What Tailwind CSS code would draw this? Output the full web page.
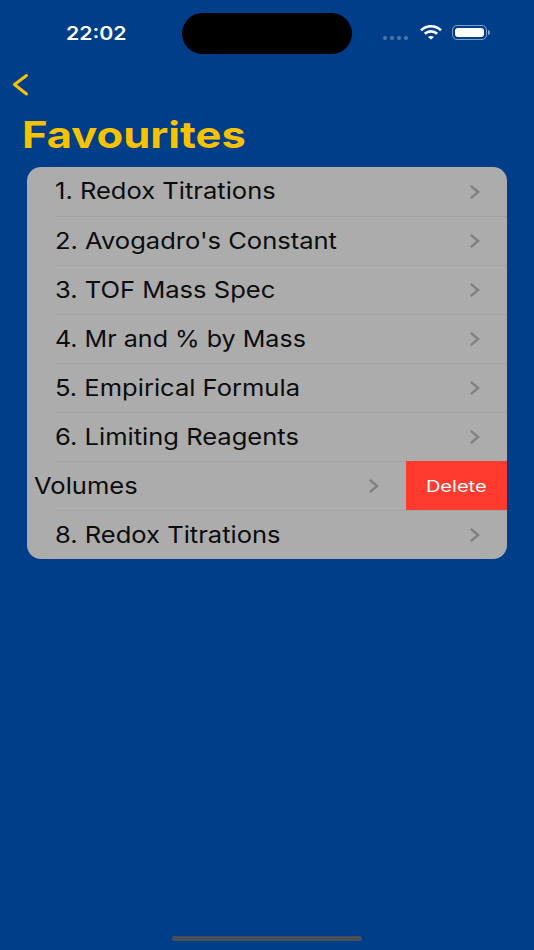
<!DOCTYPE html>
<html lang="en">
<head>
  <meta charset="UTF-8" />
  <meta name="viewport" content="width=device-width, initial-scale=1" />
  <title>Favourites</title>
  <script src="https://cdn.jsdelivr.net/npm/@tailwindcss/browser@4"></script>
</head>
<body class="bg-[#003e8a] font-['Inter',sans-serif]">
  <div class="relative w-[534px] h-[950px] overflow-hidden">
    <!-- status bar -->
    <div class="relative h-[66px]">
      <span class="absolute left-[66px] top-[21px] text-[19px] leading-[25px] font-semibold text-white origin-left scale-x-[1.12]">22:02</span>
      <div class="absolute left-[182px] top-[13px] w-[170px] h-[41px] rounded-full bg-black"></div>
      <div class="absolute left-[383px] top-[36px] flex gap-[3px]">
        <span class="w-[4px] h-[4px] rounded-full bg-white/30"></span>
        <span class="w-[4px] h-[4px] rounded-full bg-white/30"></span>
        <span class="w-[4px] h-[4px] rounded-full bg-white/30"></span>
        <span class="w-[4px] h-[4px] rounded-full bg-white/30"></span>
      </div>
      <svg class="absolute left-[420px] top-[25px]" width="22" height="15" viewBox="0 0 22 15" fill="none" stroke="white" stroke-width="2.6">
        <path d="M1 5.2C6.8 0 15.2 0 21 5.2" />
        <path d="M4.8 8.8C8.4 5.6 13.6 5.6 17.2 8.8" />
        <path d="M8 12 11 14.6 14 12C12.2 10.6 9.8 10.6 8 12Z" fill="white" stroke="none" />
      </svg>
      <div class="absolute left-[452px] top-[25px] w-[35px] h-[15px] rounded-[5px] border border-white/50 p-[2px]">
        <div class="w-full h-full rounded-[3px] bg-white"></div>
      </div>
      <div class="absolute left-[488px] top-[30px] w-[2px] h-[5px] rounded-r-sm bg-white/50"></div>
    </div>

    <!-- back -->
    <svg class="ml-[12px] mt-[7px] block" width="17" height="24" viewBox="0 0 17 24" fill="none" stroke="#f9c200" stroke-width="3" stroke-linecap="round" stroke-linejoin="round">
      <path d="M14.500 2.500 2.500 11.500 14.500 21" />
    </svg>

    <h1 class="ml-[22px] mt-[15px] text-[37px] leading-[46px] font-bold text-[#f9c200] origin-left scale-x-[1.175]">Favourites</h1>

    <!-- list -->
    <div class="ml-[27px] mt-[9px] w-[480px] rounded-[14px] bg-[#acacac] overflow-hidden text-[23px] text-[#0c0c0c]">
      <div class="flex items-center justify-between h-[49px] ml-[28px] pr-[27px]">
        <span class="origin-left scale-x-[1.11]">1. Redox Titrations</span>
        <svg width="11" height="16" viewBox="0 0 11 16" fill="none" stroke="#808080" stroke-width="2.4"><path d="M1.800 1.800 9.200 8 1.800 14.200" /></svg>
      </div>
      <div class="flex items-center justify-between h-[49px] ml-[28px] pr-[27px] border-t border-[#a2a2a2]">
        <span class="origin-left scale-x-[1.11]">2. Avogadro's Constant</span>
        <svg width="11" height="16" viewBox="0 0 11 16" fill="none" stroke="#808080" stroke-width="2.4"><path d="M1.800 1.800 9.200 8 1.800 14.200" /></svg>
      </div>
      <div class="flex items-center justify-between h-[49px] ml-[28px] pr-[27px] border-t border-[#a2a2a2]">
        <span class="origin-left scale-x-[1.11]">3. TOF Mass Spec</span>
        <svg width="11" height="16" viewBox="0 0 11 16" fill="none" stroke="#808080" stroke-width="2.4"><path d="M1.800 1.800 9.200 8 1.800 14.200" /></svg>
      </div>
      <div class="flex items-center justify-between h-[49px] ml-[28px] pr-[27px] border-t border-[#a2a2a2]">
        <span class="origin-left scale-x-[1.09]">4. Mr and % by Mass</span>
        <svg width="11" height="16" viewBox="0 0 11 16" fill="none" stroke="#808080" stroke-width="2.4"><path d="M1.800 1.800 9.200 8 1.800 14.200" /></svg>
      </div>
      <div class="flex items-center justify-between h-[49px] ml-[28px] pr-[27px] border-t border-[#a2a2a2]">
        <span class="origin-left scale-x-[1.11]">5. Empirical Formula</span>
        <svg width="11" height="16" viewBox="0 0 11 16" fill="none" stroke="#808080" stroke-width="2.4"><path d="M1.800 1.800 9.200 8 1.800 14.200" /></svg>
      </div>
      <div class="flex items-center justify-between h-[49px] ml-[28px] pr-[27px] border-t border-[#a2a2a2]">
        <span class="origin-left scale-x-[1.11]">6. Limiting Reagents</span>
        <svg width="11" height="16" viewBox="0 0 11 16" fill="none" stroke="#808080" stroke-width="2.4"><path d="M1.800 1.800 9.200 8 1.800 14.200" /></svg>
      </div>
      <!-- swiped row -->
      <div class="flex h-[49px]">
        <div class="flex flex-1 items-center justify-between ml-[28px] pr-[27px] border-t border-[#a2a2a2]">
          <span class="-ml-[21px] origin-left scale-x-[1.11]">Volumes</span>
          <svg width="11" height="16" viewBox="0 0 11 16" fill="none" stroke="#808080" stroke-width="2.4"><path d="M1.800 1.800 9.200 8 1.800 14.200" /></svg>
        </div>
        <div class="flex w-[101px] items-center justify-center bg-[#ff3b30] text-[16px] text-white"><span class="scale-x-[1.25]">Delete</span></div>
      </div>
      <div class="flex items-center justify-between h-[49px] ml-[28px] pr-[27px] border-t border-[#a2a2a2]">
        <span class="origin-left scale-x-[1.11]">8. Redox Titrations</span>
        <svg width="11" height="16" viewBox="0 0 11 16" fill="none" stroke="#808080" stroke-width="2.4"><path d="M1.800 1.800 9.200 8 1.800 14.200" /></svg>
      </div>
    </div>

    <!-- home indicator -->
    <div class="absolute left-[172px] bottom-[9px] w-[190px] h-[5px] rounded-full bg-[#4a4f57]"></div>
  </div>
</body>
</html>
